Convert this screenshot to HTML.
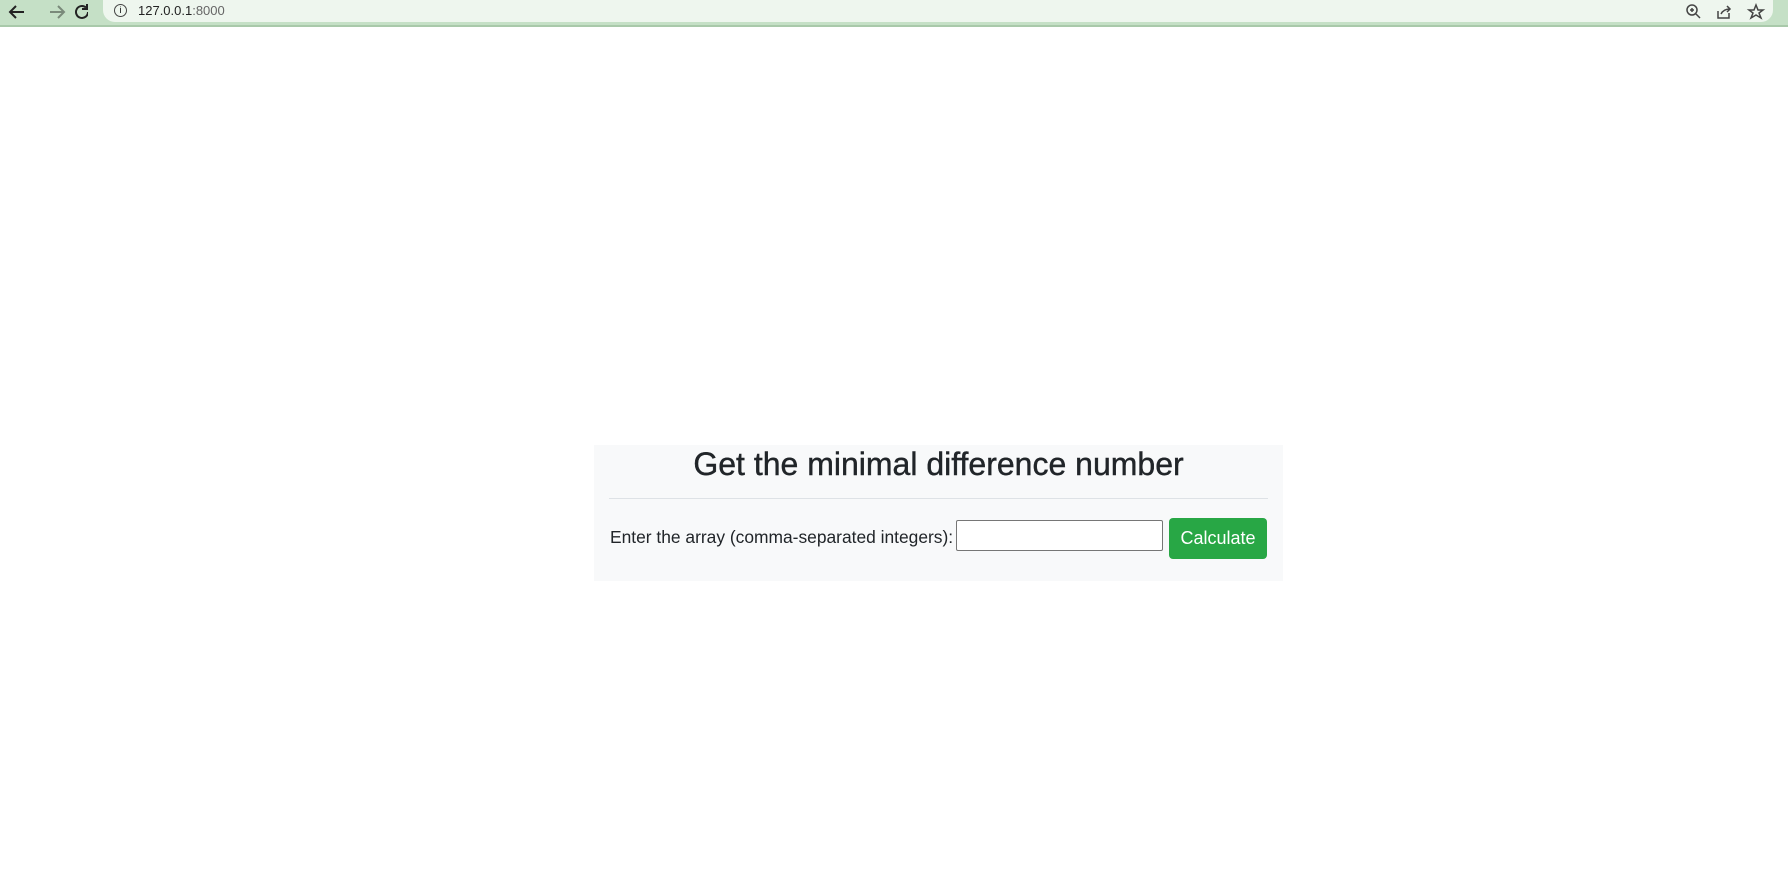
<!DOCTYPE html>
<html><head><style>
body{margin:0;width:1788px;height:871px;overflow:hidden;background:#fff;font-family:"Liberation Sans",sans-serif;position:relative}
.bar{position:absolute;left:0;top:0;width:1788px;height:25px;background:#c5e0c6;border-bottom:2px solid #a9c9aa}
.url{position:absolute;left:103px;top:0;width:1670px;height:22px;background:#eef6ee;border-radius:0 0 12px 12px}
.panel{position:absolute;left:594px;top:445px;width:689px;height:136px;background:#f8f9fa}
h2{margin:0;position:absolute;left:0;right:0;top:1px;text-align:center;font-size:32px;font-weight:500;color:#212529;-webkit-text-stroke:0.4px #212529}
hr{position:absolute;left:15px;right:15px;top:53px;margin:0;border:0;border-top:1px solid #dee2e6}
.lab{position:absolute;left:16px;top:82px;font-size:17.4px;color:#212529}
.inp{position:absolute;left:362px;top:75px;width:207px;height:31px;border:1px solid #767676;border-radius:2px;background:#fff;box-sizing:border-box}
.btn{position:absolute;left:575px;top:73px;width:98px;height:41px;background:#28a745;border-radius:4px;color:#fff;font-size:18px;text-align:center;line-height:41px}
</style></head><body>
<div class="bar"><div class="url"></div>
<svg style="position:absolute;left:8px;top:3px" width="80" height="18" viewBox="0 0 80 18" fill="none" stroke-width="2">
<path d="M16 9H3M8 3L2 9l6 6" stroke="#222"/>
<path d="M42 9h13M50 3l6 6-6 6" stroke="#7a8a7a"/>
<path d="M80 9a6 6 0 1 1-2-4.5" stroke="#222"/><path d="M79 1v5h-5" stroke="#222"/>
</svg>
<span style="position:absolute;left:114px;top:4px;border:1.5px solid #444;border-radius:50%;width:11px;height:11px;line-height:11px;text-align:center;font-size:9px">i</span>
<span style="position:absolute;left:138px;top:3px;font-size:13px;color:#222">127.0.0.1<span style="color:#666">:8000</span></span>
<svg style="position:absolute;left:1685px;top:3px" width="100" height="18" viewBox="0 0 100 18" fill="none" stroke="#444" stroke-width="1.5">
<circle cx="7" cy="7" r="5"/><path d="M11 11l4 4M5 7h4M7 5v4"/>
<path d="M33 8v7h11v-5M36 11c2-4 5-5 9-5M42 3l3 3-3 3"/>
<path d="M71 2l2 5h5l-4 3 2 5-5-3-5 3 2-5-4-3h5z"/>
</svg>
</div>
<div class="panel">
<h2>Get the minimal difference number</h2>
<hr>
<div class="lab">Enter the array (comma-separated integers):</div>
<div class="inp"></div>
<div class="btn">Calculate</div>
</div>
</body></html>
